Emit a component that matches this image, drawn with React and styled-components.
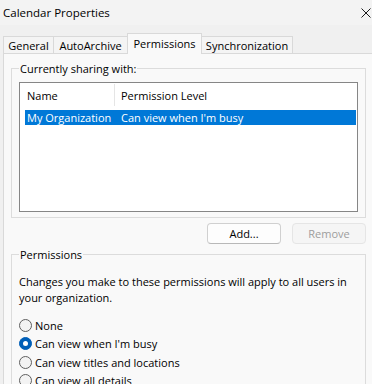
import React from 'react'
import styled, { createGlobalStyle } from 'styled-components'

const GlobalStyle = createGlobalStyle`
  body {
    margin: 0;
    background: #f0f0f0;
  }
  * {
    box-sizing: border-box;
  }
`

const Window = styled.div`
  width: 372px;
  height: 384px;
  overflow: hidden;
  display: flex;
  flex-direction: column;
  background: #f0f0f0;
  color: #000;
  font-family: 'Segoe UI', 'Open Sans', sans-serif;
  font-size: 11px;
`

const TitleBar = styled.div`
  height: 25px;
  flex: none;
  display: flex;
  align-items: center;
  justify-content: space-between;
  padding: 0 1px 0 3px;
  background: #f3f3f3;
  font-size: 11.5px;
`

const CloseIcon = () => (
  <svg width="10" height="10" viewBox="0 0 10 10">
    <path d="M0.5 0.5 L9.5 9.5 M9.5 0.5 L0.5 9.5" stroke="#1a1a1a" strokeWidth="1" />
  </svg>
)

const TabStrip = styled.div`
  height: 28px;
  flex: none;
  display: flex;
  align-items: flex-end;
  padding-left: 3px;
  position: relative;
  z-index: 1;
`

const Tab = styled.div`
  width: ${({ w }) => w}px;
  height: ${({ active }) => (active ? '21px' : '17px')};
  margin-bottom: ${({ active }) => (active ? '-1px' : '0')};
  margin-left: -1px;
  display: flex;
  align-items: ${({ active }) => (active ? 'flex-start' : 'center')};
  justify-content: center;
  padding-top: ${({ active }) => (active ? '2px' : '0')};
  border: 1px solid #d9d9d9;
  border-bottom: none;
  background: ${({ active }) => (active ? '#f9f9f9' : '#f4f4f4')};
  &:first-child {
    margin-left: 0;
  }
`

const Panel = styled.div`
  flex: 1;
  margin-left: 3px;
  padding: 7px 6px 0 7px;
  background: #f9f9f9;
  border-top: 1px solid #d9d9d9;
  border-left: 1px solid #d9d9d9;
`

const Group = styled.fieldset`
  margin: ${({ mt }) => mt || 0}px 0 0;
  padding: 0 7px ${({ pb }) => pb}px 7px;
  border: 1px solid #dcdcdc;
  min-width: 0;
`

const Legend = styled.legend`
  padding: 0 1px;
  line-height: 15px;
`

const ListView = styled.div`
  margin-top: 6px;
  height: 130px;
  border: 1px solid #868686;
  background: #fff;
`

const ListHeader = styled.div`
  height: 24px;
  display: flex;
  align-items: center;
`

const HeaderCell = styled.div`
  width: ${({ w }) => (w ? `${w}px` : 'auto')};
  height: 22px;
  display: flex;
  align-items: center;
  padding-left: ${({ pl }) => pl}px;
  border-right: ${({ divider }) => (divider ? '1px solid #e5e5e5' : 'none')};
`

const ListRow = styled.div`
  height: 15px;
  margin: 3px 1px 0 5px;
  display: flex;
  align-items: center;
  background: ${({ selected }) => (selected ? '#0078d7' : 'transparent')};
  color: ${({ selected }) => (selected ? '#fff' : '#000')};
`

const RowCell = styled.div`
  width: ${({ w }) => (w ? `${w}px` : 'auto')};
  padding-left: 2px;
  white-space: nowrap;
`

const ButtonRow = styled.div`
  display: flex;
  justify-content: flex-end;
  gap: 11px;
  margin-top: 5px;
`

const Button = styled.button`
  width: 74px;
  height: 21px;
  padding: 0;
  font: inherit;
  border-radius: 4px;
  border: 1px solid ${({ disabled }) => (disabled ? '#e5e5e5' : '#d0d0d0')};
  border-bottom-color: ${({ disabled }) => (disabled ? '#e5e5e5' : '#b8b8b8')};
  background: ${({ disabled }) => (disabled ? '#f5f5f5' : '#fdfdfd')};
  color: ${({ disabled }) => (disabled ? '#9d9d9d' : '#000')};
`

const Description = styled.p`
  margin: 12px 0 0;
  line-height: 16px;
`

const RadioList = styled.div`
  margin-top: 10px;
  display: flex;
  flex-direction: column;
`

const RadioRow = styled.label`
  height: 18.5px;
  display: flex;
  align-items: center;
  gap: 3px;
  white-space: nowrap;
`

const RadioDot = styled.span`
  width: 13px;
  height: 13px;
  flex: none;
  border-radius: 50%;
  display: flex;
  align-items: center;
  justify-content: center;
  border: 1px solid ${({ checked }) => (checked ? '#005fb8' : '#5f5f5f')};
  background: ${({ checked }) => (checked ? '#005fb8' : '#f3f3f3')};
  &::after {
    content: '';
    width: 5px;
    height: 5px;
    border-radius: 50%;
    background: #fff;
    display: ${({ checked }) => (checked ? 'block' : 'none')};
  }
`

const tabs = [
  { label: 'General', w: 51 },
  { label: 'AutoArchive', w: 75 },
  { label: 'Permissions', w: 75, active: true },
  { label: 'Synchronization', w: 92 },
]

const levels = [
  'None',
  "Can view when I'm busy",
  'Can view titles and locations',
  'Can view all details',
]

export default function App() {
  return (
    <Window>
      <GlobalStyle />
      <TitleBar>
        <span>Calendar Properties</span>
        <CloseIcon />
      </TitleBar>
      <TabStrip>
        {tabs.map((t) => (
          <Tab key={t.label} w={t.w} active={t.active}>
            {t.label}
          </Tab>
        ))}
      </TabStrip>
      <Panel>
        <Group pb={5}>
          <Legend>Currently sharing with:</Legend>
          <ListView>
            <ListHeader>
              <HeaderCell w={95} pl={7} divider>
                Name
              </HeaderCell>
              <HeaderCell pl={6}>Permission Level</HeaderCell>
            </ListHeader>
            <ListRow selected>
              <RowCell w={94}>My Organization</RowCell>
              <RowCell>Can view when I'm busy</RowCell>
            </ListRow>
          </ListView>
        </Group>
        <ButtonRow>
          <Button>Add...</Button>
          <Button disabled>Remove</Button>
        </ButtonRow>
        <Group pb={20} mt={3}>
          <Legend>Permissions</Legend>
          <Description>
            Changes you make to these permissions will apply to all users in
            your organization.
          </Description>
          <RadioList>
            {levels.map((l, i) => (
              <RadioRow key={l}>
                <RadioDot checked={i === 1} />
                {l}
              </RadioRow>
            ))}
          </RadioList>
        </Group>
      </Panel>
    </Window>
  )
}
